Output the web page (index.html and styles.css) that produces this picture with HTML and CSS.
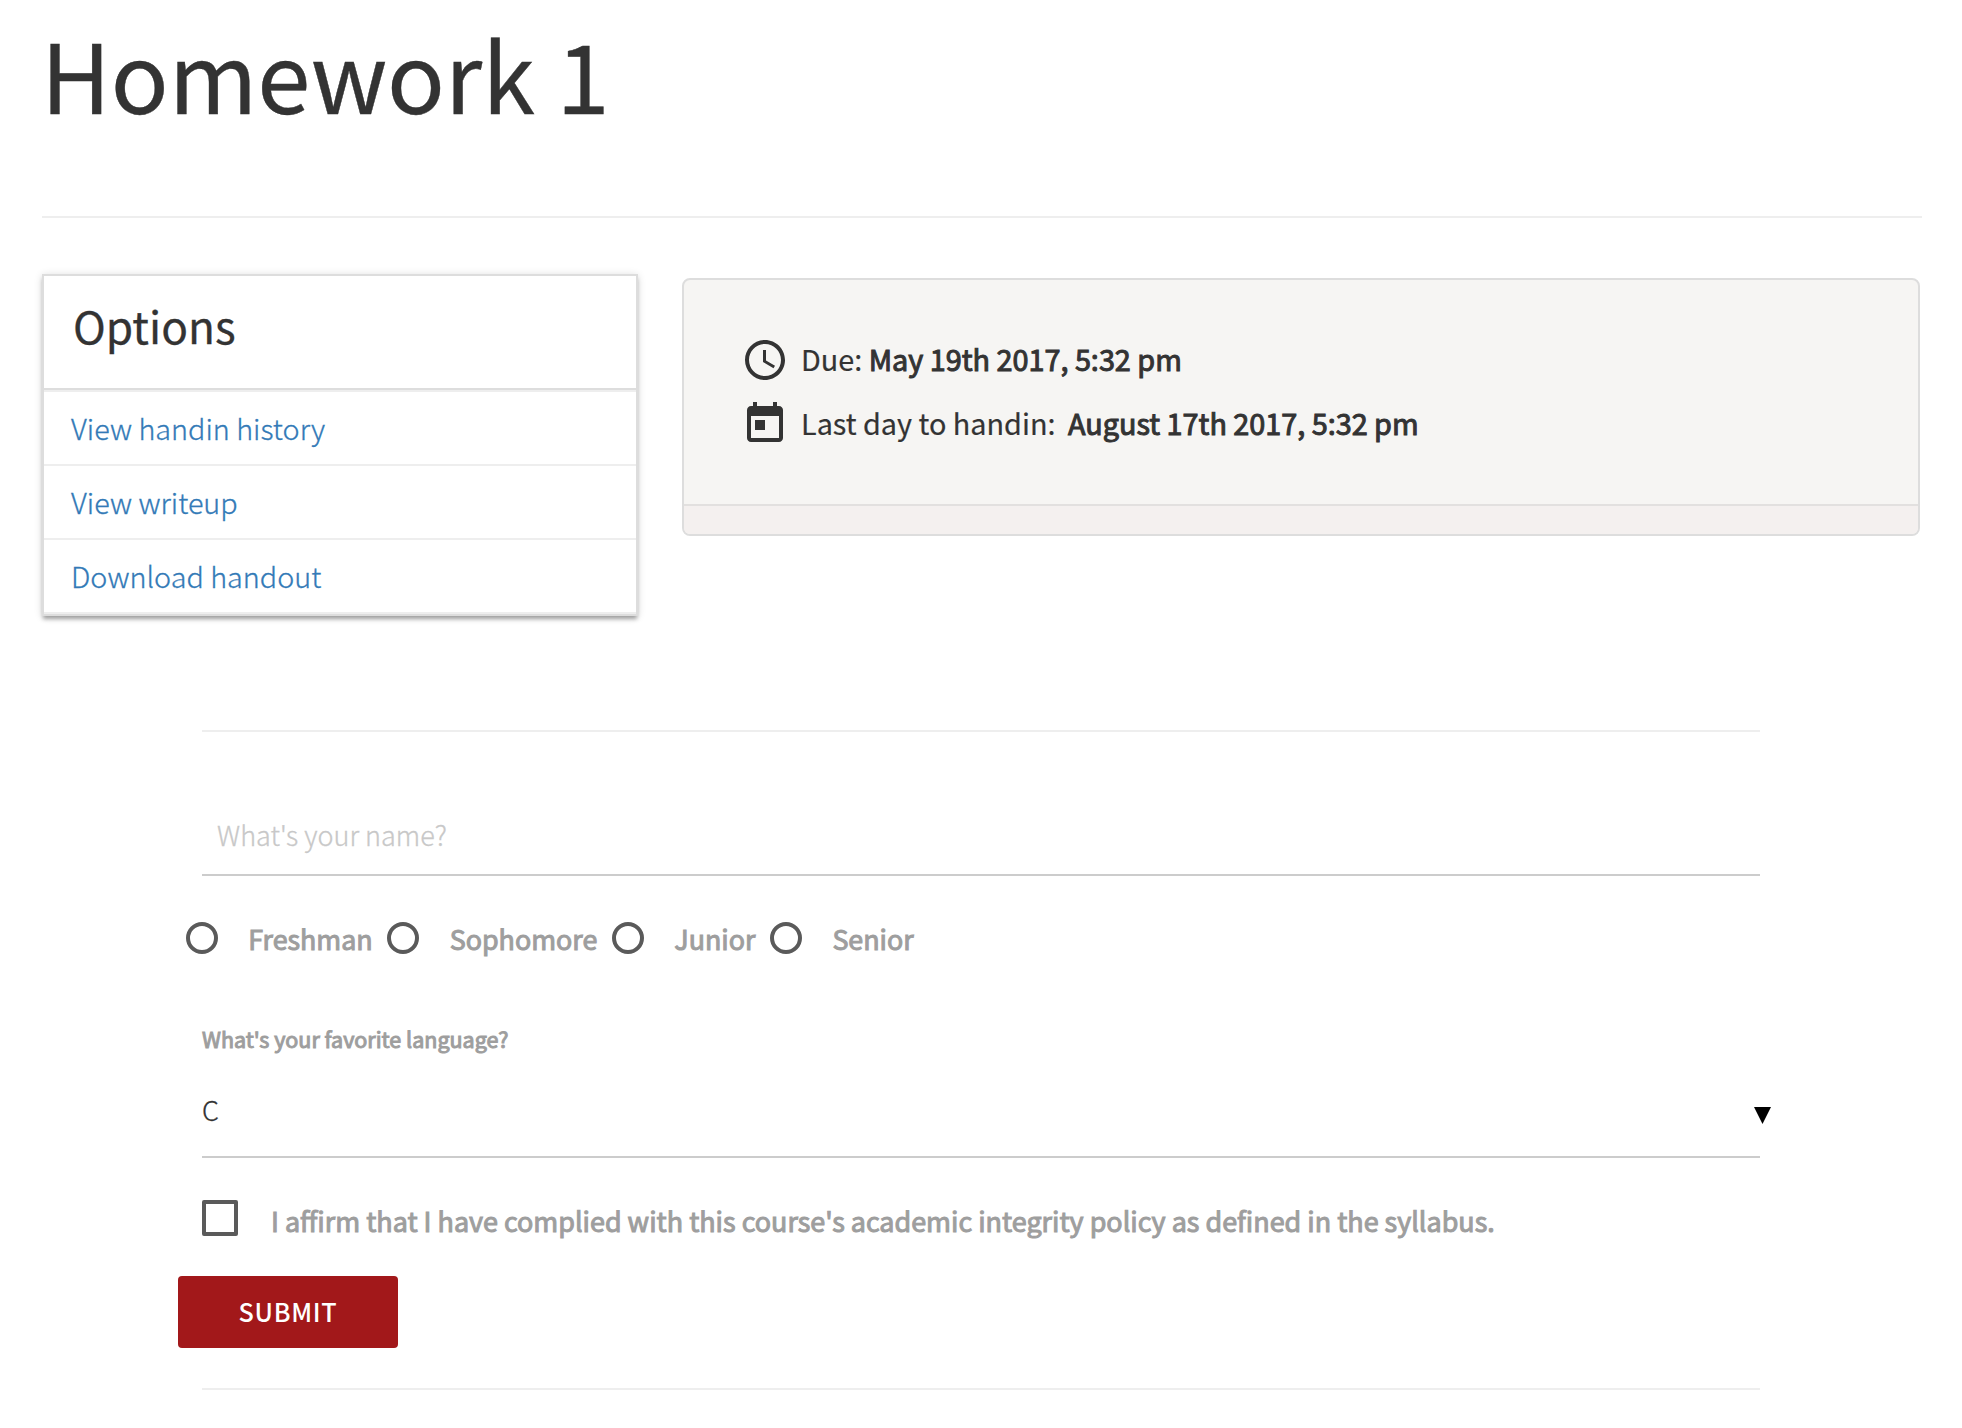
FILE: index.html
```
<!DOCTYPE html>
<html lang="en">
<head>
<meta charset="utf-8">
<title>Homework 1</title>
<link rel="stylesheet" href="styles.css">
</head>
<body>
<main class="page">
  <h1 class="title">Homework 1</h1>
  <hr class="rule">
  <div class="columns">
    <nav class="options">
      <h2 class="options-title">Options</h2>
      <a class="option" href="#">View handin history</a>
      <a class="option" href="#">View writeup</a>
      <a class="option" href="#">Download handout</a>
    </nav>
    <section class="dates">
      <div class="dates-body">
        <div class="date-row">
          <svg class="icon" viewBox="0 0 24 24"><path d="M11.99 2C6.47 2 2 6.48 2 12s4.47 10 9.99 10C17.52 22 22 17.52 22 12S17.52 2 11.99 2zM12 20c-4.42 0-8-3.58-8-8s3.58-8 8-8 8 3.58 8 8-3.58 8-8 8z"/><path d="M12.5 7H11v6l5.250 3.150.75-1.230-4.500-2.670z"/></svg>
          <p class="date-text">Due: <span class="strong">May 19th 2017, 5:32 pm</span></p>
        </div>
        <div class="date-row">
          <svg class="icon" viewBox="0 0 24 24"><path d="M19 3h-1V1h-2v2H8V1H6v2H5c-1.110 0-1.990.9-1.990 2L3 19c0 1.100.89 2 2 2h14c1.100 0 2-.9 2-2V5c0-1.100-.9-2-2-2zm0 16H5V8h14v11zM7 10h5v5H7z"/></svg>
          <p class="date-text">Last day to handin: <span class="strong last">August 17th 2017, 5:32 pm</span></p>
        </div>
      </div>
      <div class="dates-footer"></div>
    </section>
  </div>
  <form class="form">
    <hr class="rule">
    <input class="name" type="text" placeholder="What's your name?">
    <div class="radios">
      <label class="radio"><span class="circle"></span><span class="label">Freshman</span></label>
      <label class="radio"><span class="circle"></span><span class="label">Sophomore</span></label>
      <label class="radio"><span class="circle"></span><span class="label">Junior</span></label>
      <label class="radio"><span class="circle"></span><span class="label">Senior</span></label>
    </div>
    <div class="question label">What's your favorite language?</div>
    <div class="select">C<svg class="caret" viewBox="0 0 17 17"><path d="M0 0h17L8.500 17z"/></svg></div>
    <label class="affirm"><span class="box"></span><span class="label">I affirm that I have complied with this course's academic integrity policy as defined in the syllabus.</span></label>
    <button class="submit" type="button">SUBMIT</button>
    <hr class="rule">
  </form>
</main>
</body>
</html>
```
FILE: styles.css
```
* { box-sizing: border-box; }
body {
  margin: 0;
  background: #fff;
  color: #333;
  font-family: "Noto Sans CJK SC", "Open Sans", sans-serif;
}
.page { padding: 13px 40px 0 42px; }
.title {
  margin: 0 0 83px -1px;
  font-size: 95.7px;
  line-height: 120px;
  font-weight: 400;
  -webkit-text-stroke: .4px;
}
.rule {
  height: 2px;
  margin: 0;
  border: 0;
  background: #eee;
}
.columns {
  display: flex;
  align-items: flex-start;
  gap: 44px;
  margin-top: 56px;
}
.options {
  width: 596px;
  border: 2px solid #ddd;
  background: #fff;
  box-shadow: 0 4px 4px -1px rgba(0, 0, 0, .32), 0 1px 8px rgba(0, 0, 0, .14);
}
.options-title {
  height: 114px;
  margin: 0;
  padding: 19px 0 0 29px;
  border-bottom: 2px solid #ddd;
  font-size: 44.2px;
  line-height: 60px;
  font-weight: 400;
  -webkit-text-stroke: .3px;
}
.option {
  display: block;
  height: 74px;
  padding-left: 27px;
  border-bottom: 2px solid #eee;
  color: #337ab7;
  font-size: 28.75px;
  line-height: 72px;
  font-weight: 300;
  text-decoration: none;
  -webkit-text-stroke: .3px;
}
.options-title + .option {
  height: 76px;
  border-top: 2px solid #eee;
}
.dates {
  width: 1238px;
  margin-top: 4px;
  border: 2px solid #ddd;
  border-radius: 8px;
  background: #f6f5f3;
  overflow: hidden;
}
.dates-body {
  display: flex;
  flex-direction: column;
  gap: 16px;
  height: 224px;
  padding: 56px 0 0 57px;
}
.date-row {
  display: flex;
  gap: 12px;
}
.icon {
  width: 48px;
  height: 48px;
  fill: #333;
}
.date-text {
  margin: 0;
  font-size: 28.8px;
  line-height: 46px;
  -webkit-text-stroke: .2px;
}
.strong { -webkit-text-stroke: 1px; }
.last { margin-left: 6px; }
.dates-footer {
  height: 30px;
  border-top: 2px solid #e2e0df;
  background: #f4f0ef;
}
.form {
  width: 1558px;
  margin: 114px 0 0 160px;
}
.name {
  display: block;
  width: 100%;
  height: 144px;
  padding: 72px 0 10px 15px;
  border: 0;
  border-bottom: 2px solid #ccc;
  background: none;
  outline: 0;
  font: 300 27px/60px "Noto Sans CJK SC", sans-serif;
}
.name::placeholder {
  color: #c8c8c8;
  opacity: 1;
  -webkit-text-stroke: .3px;
}
.label {
  color: #9e9e9e;
  font-size: 26.85px;
  -webkit-text-stroke: 1px;
}
.radios {
  display: flex;
  gap: 14.700px;
  margin: 46px 0 0 -16px;
}
.radio {
  display: flex;
  gap: 30.300px;
  line-height: 33px;
  height: 32px;
}
.circle {
  width: 32px;
  height: 32px;
  border: 4px solid #5a5a5a;
  border-radius: 50%;
}
.question {
  margin-top: 70px;
  font-size: 21.5px;
  line-height: 30px;
}
.select {
  position: relative;
  height: 104px;
  padding-top: 36px;
  border-bottom: 2px solid #ccc;
  font-size: 27px;
  line-height: 40px;
  font-weight: 300;
  -webkit-text-stroke: .3px;
}
.caret {
  position: absolute;
  top: 53px;
  right: -11px;
  width: 17px;
  height: 17px;
  fill: #000;
}
.affirm {
  display: flex;
  gap: 33px;
  margin-top: 42px;
  line-height: 42px;
}
.affirm .label { font-size: 26.93px; }
.box {
  width: 36px;
  height: 36px;
  border: 4px solid #5a5a5a;
  border-radius: 2px;
}
.submit {
  display: block;
  width: 220px;
  height: 72px;
  margin: 34px 0 40px -24px;
  padding: 0 0 2px;
  border: 0;
  border-radius: 4px;
  background: #a2181a;
  color: #fff;
  font: 500 25.2px/70px "Noto Sans CJK SC", sans-serif;
  letter-spacing: .7px;
}
```
